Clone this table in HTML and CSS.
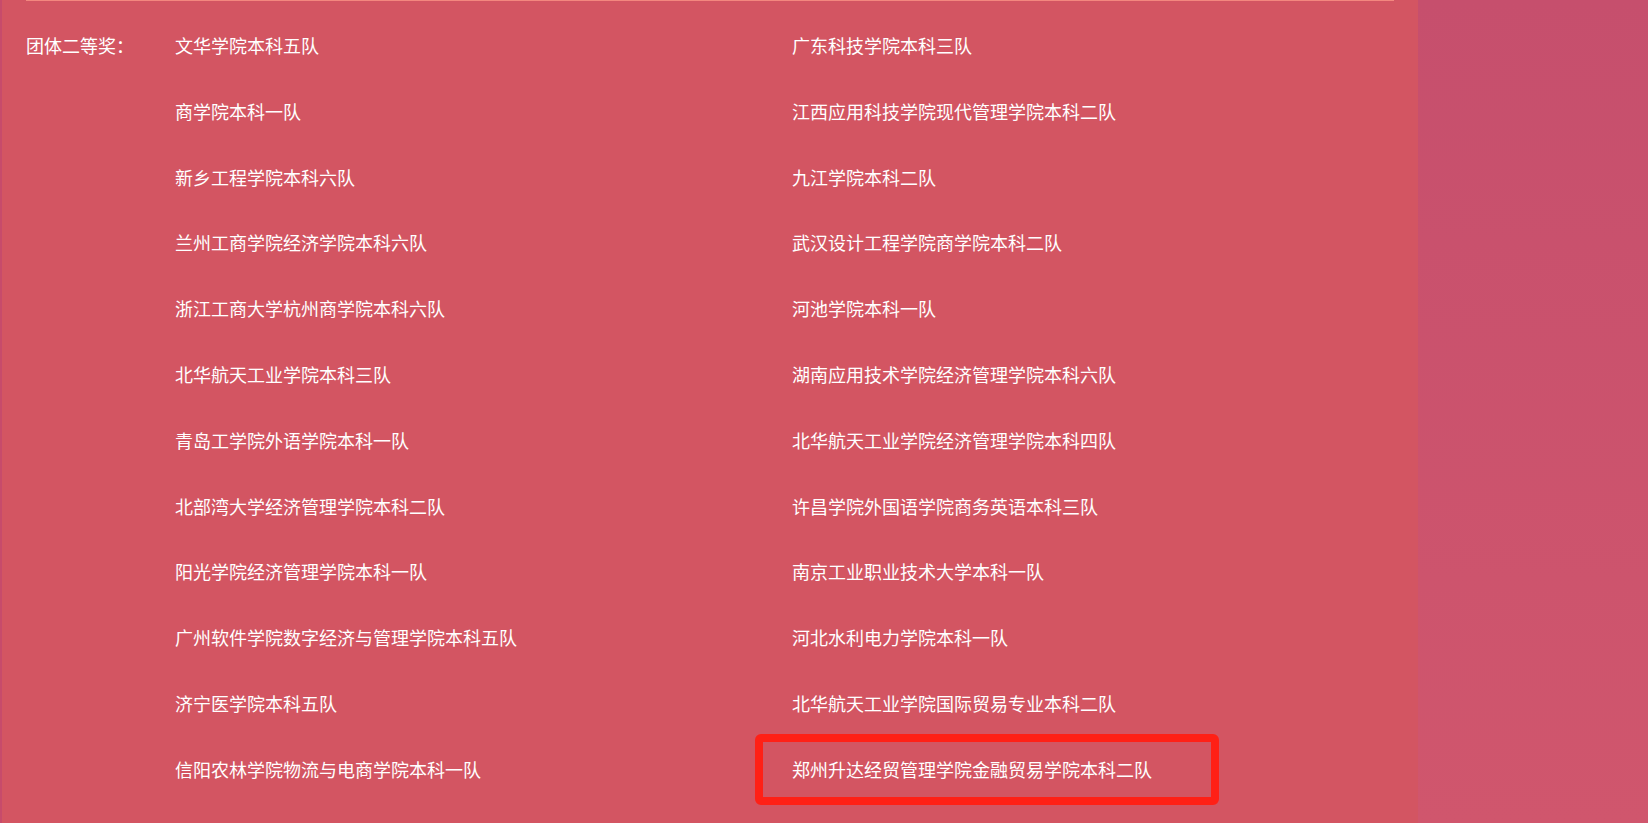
FILE: index.html
```html
<!DOCTYPE html>
<html lang="zh-CN">
<head>
<meta charset="UTF-8">
<meta name="viewport" content="width=device-width, initial-scale=1.0">
<title>获奖名单</title>
<link rel="stylesheet" href="styles.css">
</head>
<body>
    <div id="page">
        <div class="edge"></div>
        <div id="panel">
            <div class="rule"></div>
            <div class="awards">
                <div class="label">团体二等奖：</div>
                <div class="team">文华学院本科五队</div>
                <div class="team">广东科技学院本科三队</div>

                <div class="label"></div>
                <div class="team">商学院本科一队</div>
                <div class="team">江西应用科技学院现代管理学院本科二队</div>

                <div class="label"></div>
                <div class="team">新乡工程学院本科六队</div>
                <div class="team">九江学院本科二队</div>

                <div class="label"></div>
                <div class="team">兰州工商学院经济学院本科六队</div>
                <div class="team">武汉设计工程学院商学院本科二队</div>

                <div class="label"></div>
                <div class="team">浙江工商大学杭州商学院本科六队</div>
                <div class="team">河池学院本科一队</div>

                <div class="label"></div>
                <div class="team">北华航天工业学院本科三队</div>
                <div class="team">湖南应用技术学院经济管理学院本科六队</div>

                <div class="label"></div>
                <div class="team">青岛工学院外语学院本科一队</div>
                <div class="team">北华航天工业学院经济管理学院本科四队</div>

                <div class="label"></div>
                <div class="team">北部湾大学经济管理学院本科二队</div>
                <div class="team">许昌学院外国语学院商务英语本科三队</div>

                <div class="label"></div>
                <div class="team">阳光学院经济管理学院本科一队</div>
                <div class="team">南京工业职业技术大学本科一队</div>

                <div class="label"></div>
                <div class="team">广州软件学院数字经济与管理学院本科五队</div>
                <div class="team">河北水利电力学院本科一队</div>

                <div class="label"></div>
                <div class="team">济宁医学院本科五队</div>
                <div class="team">北华航天工业学院国际贸易专业本科二队</div>

                <div class="label"></div>
                <div class="team">信阳农林学院物流与电商学院本科一队</div>
                <div class="team marked">郑州升达经贸管理学院金融贸易学院本科二队</div>
            </div>
        </div>
        <div class="side"></div>
    </div>
</body>
</html>
```

FILE: styles.css
```css
html, body {
    margin: 0;
    height: 100%;
}
body {
    font-family: "Noto Sans CJK SC", "Microsoft YaHei", sans-serif;
    font-size: 18px;
    color: #fff;
    overflow: hidden;
}
#page {
    display: flex;
    height: 100vh;
}
.edge {
    width: 2px;
    background: #c74b6b;
}
#panel {
    width: 1368px;
    padding: 0 24px;
    background: #d35562;
}
.rule {
    height: 1px;
    background: #f3877f;
}
.awards {
    display: grid;
    grid-template-columns: 149px 617px 1fr;
    grid-auto-rows: 65.8px;
    padding-top: 12px;
}
.label, .team {
    line-height: 65.8px;
    white-space: nowrap;
}
.marked {
    position: relative;
}
.marked::after {
    content: "";
    position: absolute;
    left: -37px;
    top: -3px;
    width: 448px;
    height: 55px;
    border: 8px solid #ff2016;
    border-radius: 6px;
}
.side {
    flex: 1;
    background: linear-gradient(#c64f6d, #d0566d);
}
```
